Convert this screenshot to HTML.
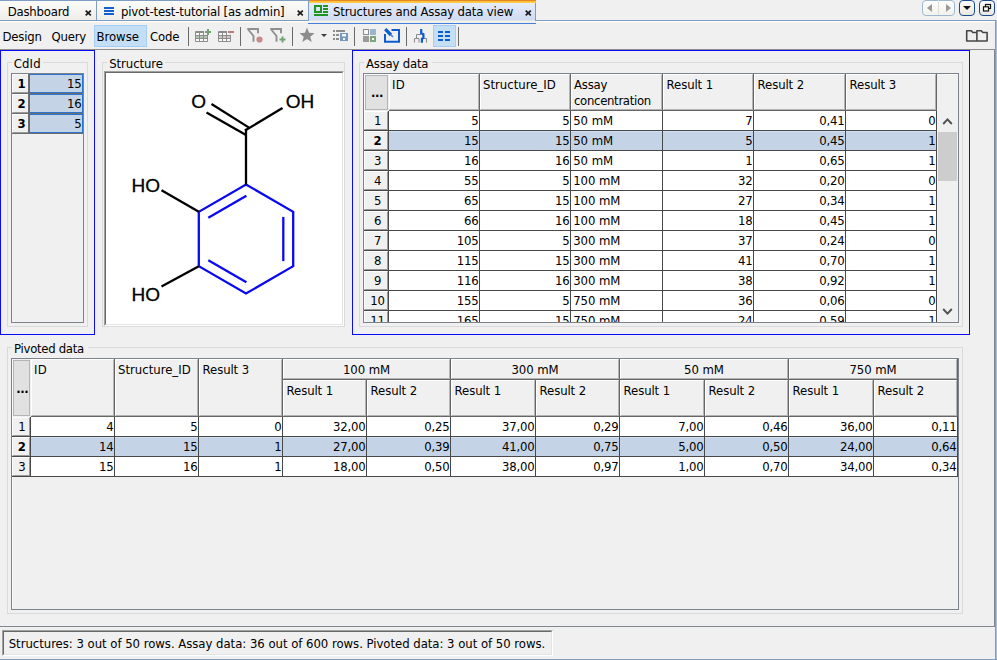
<!DOCTYPE html>
<html lang="en"><head><meta charset="utf-8"><title>Structures and Assay data view</title>
<style>
html,body{margin:0;padding:0;}
body{width:997px;height:660px;background:#f0f0f0;position:relative;overflow:hidden;font-family:"DejaVu Sans Condensed","Liberation Sans",sans-serif;font-size:13px;color:#000;}
.t{position:absolute;white-space:nowrap;line-height:16px;height:16px;letter-spacing:-0.2px;}
.hc{background:#f0f0f0;box-sizing:border-box;border-left:1px solid #fff;border-top:1px solid #fff;border-right:1px solid #b4b4b4;border-bottom:1px solid #b4b4b4;}
svg{position:absolute;overflow:visible}
</style></head>
<body>
<div style="position:absolute;left:0px;top:0px;width:97px;height:21px;box-sizing:border-box;border-top:1px solid #7d9ec2;border-right:1px solid #7d9ec2;background:linear-gradient(#fbfbf9,#eeede8)"></div>
<div style="position:absolute;left:97px;top:0px;width:212px;height:21px;box-sizing:border-box;border-top:1px solid #7d9ec2;border-right:1px solid #7d9ec2;background:linear-gradient(#fbfbf9,#eeede8)"></div>
<div style="position:absolute;left:0px;top:20px;width:309px;height:1px;background:#7d9ec2"></div>
<div style="position:absolute;left:0px;top:21px;width:309px;height:1px;background:#ffffff"></div>
<div style="position:absolute;left:535px;top:20px;width:461px;height:1px;background:#7d9ec2"></div>
<div style="position:absolute;left:536px;top:21px;width:459px;height:1px;background:#ffffff"></div>
<div style="position:absolute;left:536px;top:22px;width:459px;height:1px;background:#f6f3e8"></div>
<div style="position:absolute;left:0px;top:22px;width:308px;height:1px;background:#f6f3e8"></div>
<div style="position:absolute;left:309px;top:0px;width:226px;height:22px;background:linear-gradient(#f4f7fe 0px,#e6ecfb 3px,#cfdbf2 20px,#f5f1e2 21px)"></div>
<div style="position:absolute;left:309px;top:0px;width:227px;height:1px;background:#e5862b"></div>
<div style="position:absolute;left:309px;top:1px;width:227px;height:2px;background:linear-gradient(#ffbb25,#ffd257)"></div>
<div style="position:absolute;left:535px;top:3px;width:1px;height:18px;background:#7d9ec2"></div>
<div style="position:absolute;left:308px;top:23px;width:228px;height:1px;background:#437fdb"></div>
<div class="t tb" style="top:3.5px;left:7.699999999999999px;">Dashboard</div>
<div class="t tb" style="top:3.5px;left:121px;letter-spacing:-0.18px;">pivot-test-tutorial [as admin]</div>
<div class="t tb" style="top:3.5px;left:333px;letter-spacing:-0.16px;">Structures and Assay data view</div>
<svg style="left:84.7px;top:9.8px" width="7" height="6" viewBox="0 0 7 6"><path d="M0.7 0.6 L5.8 5.4 M5.8 0.6 L0.7 5.4" stroke="#1a1a1a" stroke-width="1.75" fill="none"/></svg>
<svg style="left:296.7px;top:9.8px" width="7" height="6" viewBox="0 0 7 6"><path d="M0.7 0.6 L5.8 5.4 M5.8 0.6 L0.7 5.4" stroke="#1a1a1a" stroke-width="1.75" fill="none"/></svg>
<svg style="left:524.8px;top:9.8px" width="7" height="6" viewBox="0 0 7 6"><path d="M0.7 0.6 L5.8 5.4 M5.8 0.6 L0.7 5.4" stroke="#1a1a1a" stroke-width="1.75" fill="none"/></svg>
<div style="position:absolute;left:104px;top:7px;width:10px;height:2px;background:#1560d0"></div>
<div style="position:absolute;left:104px;top:10px;width:10px;height:2px;background:#1560d0"></div>
<div style="position:absolute;left:104px;top:13px;width:10px;height:2px;background:#1560d0"></div>
<svg style="left:314px;top:5px" width="14" height="11" viewBox="0 0 14 11"><rect x="1" y="1" width="6" height="6" fill="none" stroke="#1f961f" stroke-width="2"/><rect x="9" y="0" width="5" height="2" fill="#1f961f"/><rect x="9" y="3" width="5" height="2" fill="#1f961f"/><rect x="9" y="6" width="5" height="2" fill="#1f961f"/><rect x="0" y="9" width="14" height="2" fill="#1f961f"/></svg>
<div style="position:absolute;left:922px;top:0px;width:33px;height:16px;box-sizing:border-box;border:1px solid #9db7d3;border-radius:4px;background:linear-gradient(#fdfdfc,#f3f2ec)"></div>
<div style="position:absolute;left:938px;top:0px;width:1px;height:15px;background:#dcdcd8"></div>
<svg style="left:927px;top:4px" width="5" height="8" viewBox="0 0 5 8"><path d="M5 0 L0 4 L5 8 Z" fill="#9a9a9a"/></svg>
<svg style="left:946px;top:4px" width="5" height="8" viewBox="0 0 5 8"><path d="M0 0 L5 4 L0 8 Z" fill="#9a9a9a"/></svg>
<div style="position:absolute;left:959px;top:0px;width:16px;height:16px;box-sizing:border-box;border:1px solid #184a8c;border-radius:4px;background:linear-gradient(#fdfdfc,#e9e8e0)"></div>
<svg style="left:963px;top:6px" width="8" height="4" viewBox="0 0 8 4"><path d="M0 0 L8 0 L4 4 Z" fill="#111"/></svg>
<div style="position:absolute;left:979px;top:0px;width:16px;height:16px;box-sizing:border-box;border:1px solid #184a8c;border-radius:4px;background:linear-gradient(#fdfdfc,#e9e8e0)"></div>
<svg style="left:983px;top:4px" width="9" height="8" viewBox="0 0 9 8"><rect x="2.5" y="0.5" width="5" height="4" fill="#fff" stroke="#111" stroke-width="1.2"/><rect x="0.5" y="2.8" width="5" height="4.2" fill="#fff" stroke="#111" stroke-width="1.2"/></svg>
<div style="position:absolute;left:995px;top:20px;width:1px;height:640px;background:#7d9ec2"></div>
<div style="position:absolute;left:996px;top:20px;width:1px;height:640px;background:#a9c0d8"></div>
<div style="position:absolute;left:0px;top:659px;width:997px;height:1px;background:#7d9ec2"></div>
<div style="position:absolute;left:0px;top:49px;width:995px;height:1px;background:#8c8c8c"></div>
<div style="position:absolute;left:94px;top:25px;width:53px;height:22px;box-sizing:border-box;border:1px solid #a3cdf3;background:#c4def5"></div>
<div class="t " style="top:28.5px;left:2.5px;">Design</div>
<div class="t " style="top:28.5px;left:51.5px;">Query</div>
<div class="t " style="top:28.5px;left:96.4px;letter-spacing:0px;">Browse</div>
<div class="t " style="top:28.5px;left:150px;">Code</div>
<div style="position:absolute;left:188px;top:27px;width:1px;height:19px;background:#6a6a6a"></div>
<div style="position:absolute;left:240px;top:27px;width:1px;height:19px;background:#6a6a6a"></div>
<div style="position:absolute;left:292px;top:27px;width:1px;height:19px;background:#6a6a6a"></div>
<div style="position:absolute;left:354px;top:27px;width:1px;height:19px;background:#6a6a6a"></div>
<div style="position:absolute;left:406px;top:27px;width:1px;height:19px;background:#6a6a6a"></div>
<div style="position:absolute;left:458px;top:27px;width:1px;height:19px;background:#6a6a6a"></div>
<svg style="left:195px;top:31px" width="13" height="11" viewBox="0 0 13 11"><rect x="0" y="0" width="13" height="11" rx="1" fill="#8c8c8c"/><rect x="1" y="2" width="3" height="2" fill="#fafafa"/><rect x="5" y="2" width="3" height="2" fill="#fafafa"/><rect x="9" y="2" width="3" height="2" fill="#fafafa"/><rect x="1" y="5" width="3" height="2" fill="#b4c4b4"/><rect x="5" y="5" width="3" height="2" fill="#b4c4b4"/><rect x="9" y="5" width="3" height="2" fill="#b4c4b4"/><rect x="1" y="8" width="3" height="2" fill="#fafafa"/><rect x="5" y="8" width="3" height="2" fill="#fafafa"/><rect x="9" y="8" width="3" height="2" fill="#fafafa"/></svg>
<svg style="left:204px;top:28px" width="8" height="9" viewBox="0 0 8 9"><path d="M0 0 H8 V9 L5.5 6.5 H0 Z" fill="#f0f0f0"/><path d="M4 1 V7 M1 4 H7" stroke="#72a272" stroke-width="2"/></svg>
<svg style="left:218px;top:31px" width="13" height="11" viewBox="0 0 13 11"><rect x="0" y="0" width="13" height="11" rx="1" fill="#8c8c8c"/><rect x="1" y="2" width="3" height="2" fill="#fafafa"/><rect x="5" y="2" width="3" height="2" fill="#fafafa"/><rect x="9" y="2" width="3" height="2" fill="#fafafa"/><rect x="1" y="5" width="3" height="2" fill="#d8c4c4"/><rect x="5" y="5" width="3" height="2" fill="#d8c4c4"/><rect x="9" y="5" width="3" height="2" fill="#d8c4c4"/><rect x="1" y="8" width="3" height="2" fill="#fafafa"/><rect x="5" y="8" width="3" height="2" fill="#fafafa"/><rect x="9" y="8" width="3" height="2" fill="#fafafa"/></svg>
<svg style="left:227px;top:30px" width="8" height="5" viewBox="0 0 8 5"><path d="M0 0 H8 V5 H4 L0 3.5 Z" fill="#f0f0f0"/><rect x="1" y="1" width="6" height="2" fill="#b97a7a"/></svg>
<svg style="left:247px;top:28px" width="15" height="14" viewBox="0 0 15 14"><path d="M0.3 1 H11 V5.2 M0.8 1 L6.5 8 V13.7" fill="none" stroke="#8f8f8f" stroke-width="1.9"/></svg>
<svg style="left:255.5px;top:35.5px" width="7" height="7" viewBox="0 0 7 7"><circle cx="3.5" cy="3.5" r="3.1" fill="#c98a8a"/></svg>
<svg style="left:270px;top:28px" width="15" height="14" viewBox="0 0 15 14"><path d="M0.3 1 H11 V5.2 M0.8 1 L6.5 8 V13.7" fill="none" stroke="#8f8f8f" stroke-width="1.9"/></svg>
<svg style="left:278.5px;top:35.5px" width="7" height="7" viewBox="0 0 7 7"><path d="M3.5 0.5 V6.5 M0.5 3.5 H6.5" stroke="#72a272" stroke-width="2"/></svg>
<svg style="left:299.2px;top:27px" width="16" height="16" viewBox="0 0 16 16"><polygon points="8.00,0.60 10.00,5.85 15.61,6.13 11.23,9.65 12.70,15.07 8.00,12.00 3.30,15.07 4.77,9.65 0.39,6.13 6.00,5.85" fill="#8c8c8c"/></svg>
<svg style="left:321px;top:34px" width="6" height="3" viewBox="0 0 6 3"><path d="M0 0 H6 L3 3 Z" fill="#3c3c3c"/></svg>
<svg style="left:333px;top:30px" width="15" height="11" viewBox="0 0 15 11"><g fill="#8c8c8c"><rect x="0" y="0" width="2" height="2"/><rect x="3" y="0" width="9" height="2"/><rect x="0" y="4" width="2" height="2"/><rect x="3" y="4" width="3" height="2"/><rect x="0" y="8" width="2" height="2"/><rect x="3" y="8" width="3" height="2"/></g><rect x="7" y="3" width="8" height="8" fill="#7697bd"/><rect x="9" y="4" width="4" height="2.5" fill="#f6f6f6"/><rect x="10" y="8" width="2" height="2" fill="#f6f6f6"/></svg>
<svg style="left:363px;top:29px" width="13" height="13" viewBox="0 0 13 13"><rect x="0.5" y="0.5" width="5" height="5" fill="#f8f8f8" stroke="#8a8a8a"/><rect x="7" y="0" width="6" height="6" fill="#9db4ce"/><rect x="0" y="7" width="6" height="6" fill="#9a9a9a"/><rect x="7" y="7" width="6" height="6" fill="#7fa57f"/><rect x="9" y="9" width="2" height="2" fill="#fafafa"/></svg>
<svg style="left:384px;top:28px" width="16" height="15" viewBox="0 0 16 15"><path d="M7.5 2 H15 V13.7 H1 V6" fill="none" stroke="#0d5bd1" stroke-width="2"/><path d="M1.2 1.2 L7 7" stroke="#0d5bd1" stroke-width="3.2"/><path d="M6.5 6.5 L9 9" stroke="#4a86dd" stroke-width="1.6"/></svg>
<svg style="left:414px;top:29px" width="13" height="14" viewBox="0 0 13 14"><path d="M0.5 13.6 V9.5 H5 V13.6 M2.5 9.5 V5.5 H7 M10 9.5 H12.5 V13.6" fill="none" stroke="#8a8a8a" stroke-width="1"/><path d="M7.2 0 V4.2 L9.4 5.2 V8.8 L7.9 9.8 V13.7" fill="none" stroke="#0d5bd1" stroke-width="2.2"/></svg>
<div style="position:absolute;left:433px;top:25px;width:23px;height:22px;box-sizing:border-box;border:1px solid #a3cdf3;background:#c4def5"></div>
<div style="position:absolute;left:438px;top:31px;width:5px;height:2px;background:#0d5bd1"></div>
<div style="position:absolute;left:438px;top:35px;width:5px;height:2px;background:#0d5bd1"></div>
<div style="position:absolute;left:438px;top:39px;width:5px;height:2px;background:#0d5bd1"></div>
<div style="position:absolute;left:445px;top:31px;width:5px;height:2px;background:#0d5bd1"></div>
<div style="position:absolute;left:445px;top:35px;width:5px;height:2px;background:#0d5bd1"></div>
<div style="position:absolute;left:445px;top:39px;width:5px;height:2px;background:#0d5bd1"></div>
<svg style="left:960px;top:24px" width="30" height="20" viewBox="0 0 30 20"><path d="M6.7 17 V6.7 H11.3 L12.8 8.5 H16.9 V17 Z M16.9 17 V6.7 H21.3 L22.8 8.5 H27.1 V17 Z" fill="none" stroke="#464646" stroke-width="1.6" stroke-linejoin="round"/></svg>
<div style="position:absolute;left:0px;top:50px;width:95px;height:285px;box-sizing:border-box;border:1px solid #0a0aff"></div>
<div style="position:absolute;left:7px;top:62px;width:81px;height:265px;box-sizing:border-box;border:1px solid #dadada"></div>
<div style="position:absolute;left:11.8px;top:62px;width:31px;height:1px;background:#f0f0f0"></div>
<div class="t " style="top:55.5px;left:13.8px;letter-spacing:0.1px;">CdId</div>
<div style="position:absolute;left:11px;top:73px;width:73px;height:250px;box-sizing:border-box;border:1px solid #7e828a"></div>
<div class="hc" style="position:absolute;left:12px;top:74px;width:17px;height:19px;border-right-color:#9a9a9a;border-bottom-color:#9a9a9a"></div>
<div class="t " style="top:75.5px;left:-78.5px;width:200px;text-align:center;font-weight:bold;">1</div>
<div style="position:absolute;left:29px;top:74px;width:54px;height:19px;box-sizing:border-box;border:1px solid #2a73cf;background:#c4d4e6"></div>
<div class="t " style="top:75.5px;right:915.5px;">15</div>
<div style="position:absolute;left:12px;top:93px;width:71px;height:1px;background:#6e6e6e"></div>
<div style="position:absolute;left:28px;top:74px;width:1px;height:19px;background:#6e6e6e"></div>
<div class="hc" style="position:absolute;left:12px;top:94px;width:17px;height:19px;border-right-color:#9a9a9a;border-bottom-color:#9a9a9a"></div>
<div class="t " style="top:95.5px;left:-78.5px;width:200px;text-align:center;font-weight:bold;">2</div>
<div style="position:absolute;left:29px;top:94px;width:54px;height:19px;box-sizing:border-box;border:1px solid #2a73cf;background:#c4d4e6"></div>
<div class="t " style="top:95.5px;right:915.5px;">16</div>
<div style="position:absolute;left:12px;top:113px;width:71px;height:1px;background:#6e6e6e"></div>
<div style="position:absolute;left:28px;top:94px;width:1px;height:19px;background:#6e6e6e"></div>
<div class="hc" style="position:absolute;left:12px;top:114px;width:17px;height:19px;border-right-color:#9a9a9a;border-bottom-color:#9a9a9a"></div>
<div class="t " style="top:115.5px;left:-78.5px;width:200px;text-align:center;font-weight:bold;">3</div>
<div style="position:absolute;left:29px;top:114px;width:54px;height:19px;box-sizing:border-box;border:1px solid #2a73cf;background:#c4d4e6"></div>
<div class="t " style="top:115.5px;right:915.5px;">5</div>
<div style="position:absolute;left:12px;top:133px;width:71px;height:1px;background:#6e6e6e"></div>
<div style="position:absolute;left:28px;top:114px;width:1px;height:19px;background:#6e6e6e"></div>
<div style="position:absolute;left:102px;top:62px;width:243px;height:265px;box-sizing:border-box;border:1px solid #dadada"></div>
<div style="position:absolute;left:107.3px;top:62px;width:58px;height:1px;background:#f0f0f0"></div>
<div class="t " style="top:55.5px;left:109.3px;letter-spacing:-0.1px;">Structure</div>
<div style="position:absolute;left:104px;top:71px;width:240px;height:255px;box-sizing:border-box;background:#fff;border-top:1px solid #a0a0a0;border-left:1px solid #a0a0a0;border-right:1px solid #fff;border-bottom:1px solid #fff"></div>
<div style="position:absolute;left:105px;top:72px;width:238px;height:253px;box-sizing:border-box;border-top:1px solid #696969;border-left:1px solid #696969;border-right:1px solid #e3e3e3;border-bottom:1px solid #e3e3e3"></div>
<svg style="left:0;top:0" width="997" height="660" viewBox="0 0 997 660"><polygon points="246.0,184.5 293.2,211.8 293.2,266.2 246.0,293.5 198.8,266.2 198.8,211.8" fill="none" stroke="#0a0af2" stroke-width="2.3" stroke-linejoin="miter"/><line x1="208.3" y1="217.7" x2="246.4" y2="195.7" stroke="#0a0af2" stroke-width="2.3" stroke-linecap="butt"/><line x1="283.3" y1="216.9" x2="283.3" y2="261.1" stroke="#0a0af2" stroke-width="2.3" stroke-linecap="butt"/><line x1="246.4" y1="282.3" x2="208.3" y2="260.3" stroke="#0a0af2" stroke-width="2.3" stroke-linecap="butt"/><line x1="246.0" y1="184.5" x2="246.0" y2="128.8" stroke="#000" stroke-width="2.3" stroke-linecap="butt"/><line x1="245.0" y1="130.6" x2="282.5" y2="108.0" stroke="#000" stroke-width="2.3" stroke-linecap="butt"/><line x1="249.0" y1="127.6" x2="211.5" y2="104.0" stroke="#000" stroke-width="2.3" stroke-linecap="butt"/><line x1="246.0" y1="135.0" x2="206.5" y2="112.5" stroke="#000" stroke-width="2.3" stroke-linecap="butt"/><line x1="198.8" y1="211.8" x2="161.5" y2="190.3" stroke="#000" stroke-width="2.3" stroke-linecap="butt"/><line x1="198.8" y1="266.2" x2="161.5" y2="286.6" stroke="#000" stroke-width="2.3" stroke-linecap="butt"/><g font-family="'Liberation Sans',sans-serif" font-size="19" fill="#000" stroke="#000" stroke-width="0.3"><text x="191.2" y="108.3">O</text><text x="285.8" y="108.3">OH</text><text x="131.6" y="191.8">HO</text><text x="131.6" y="300.6">HO</text></g></svg>
<div style="position:absolute;left:352px;top:50px;width:618px;height:285px;box-sizing:border-box;border:1px solid #0a0aff"></div>
<div style="position:absolute;left:359px;top:62px;width:604px;height:265px;box-sizing:border-box;border:1px solid #dadada"></div>
<div style="position:absolute;left:364px;top:62px;width:68px;height:1px;background:#f0f0f0"></div>
<div class="t " style="top:55.5px;left:366px;">Assay data</div>
<div style="position:absolute;left:363px;top:73px;width:596px;height:250px;box-sizing:border-box;border:1px solid #7e828a;background:#f0f0f0"></div>
<div style="position:absolute;left:364px;top:74px;width:1px;height:248px;background:#f9f9f9"></div>
<div style="position:absolute;left:364px;top:74px;width:594px;height:1px;background:#f9f9f9"></div>
<div style="position:absolute;left:389px;top:110px;width:547px;height:212px;background:#fff"></div>
<div style="position:absolute;left:365px;top:75px;width:23px;height:35px;background:#e1e1e1;box-sizing:border-box;border:1px solid #b4b4b4;"></div>
<div class="t " style="top:84.5px;left:277px;width:200px;text-align:center;font-weight:bold;letter-spacing:-0.5px;">...</div>
<div class="hc" style="position:absolute;left:389px;top:74px;width:90px;height:36px;"></div>
<div style="position:absolute;left:479px;top:74px;width:1px;height:37px;background:#666666"></div>
<div class="t " style="top:76.8px;left:392px;letter-spacing:0.4px;">ID</div>
<div class="hc" style="position:absolute;left:480px;top:74px;width:90px;height:36px;"></div>
<div style="position:absolute;left:570px;top:74px;width:1px;height:37px;background:#666666"></div>
<div class="t " style="top:76.8px;left:483px;letter-spacing:0.0px;">Structure_ID</div>
<div class="hc" style="position:absolute;left:571px;top:74px;width:91px;height:36px;"></div>
<div style="position:absolute;left:662px;top:74px;width:1px;height:37px;background:#666666"></div>
<div class="t " style="top:76.8px;left:574px;">Assay</div>
<div class="t " style="top:92.8px;left:574px;letter-spacing:-0.32px;">concentration</div>
<div class="hc" style="position:absolute;left:663px;top:74px;width:90px;height:36px;"></div>
<div style="position:absolute;left:753px;top:74px;width:1px;height:37px;background:#666666"></div>
<div class="t " style="top:76.8px;left:666.6px;letter-spacing:-0.1px;">Result 1</div>
<div class="hc" style="position:absolute;left:754px;top:74px;width:91px;height:36px;"></div>
<div style="position:absolute;left:845px;top:74px;width:1px;height:37px;background:#666666"></div>
<div class="t " style="top:76.8px;left:757.6px;letter-spacing:-0.1px;">Result 2</div>
<div class="hc" style="position:absolute;left:846px;top:74px;width:90px;height:36px;"></div>
<div style="position:absolute;left:936px;top:74px;width:1px;height:37px;background:#666666"></div>
<div class="t " style="top:76.8px;left:849.6px;letter-spacing:-0.1px;">Result 3</div>
<div style="position:absolute;left:389px;top:110px;width:548px;height:1px;background:#666666"></div>
<div style="position:absolute;left:364px;top:110px;width:594px;height:212px;overflow:hidden"><div style="position:absolute;left:-364px;top:-110px;width:997px;height:660px">
<div class="hc" style="position:absolute;left:364px;top:111px;width:24px;height:19px;border-right-color:#9a9a9a;border-bottom-color:#9a9a9a"></div>
<div class="t " style="top:112.5px;left:277.5px;width:200px;text-align:center;">1</div>
<div style="position:absolute;left:364px;top:130px;width:573px;height:1px;background:#484848"></div>
<div class="t " style="top:112.5px;right:518.5px;">5</div>
<div class="t " style="top:112.5px;right:427.5px;">5</div>
<div class="t " style="top:112.5px;left:573.2px;letter-spacing:-0.05px;">50 mM</div>
<div class="t " style="top:112.5px;right:244.5px;">7</div>
<div class="t " style="top:112.5px;right:152.5px;">0,41</div>
<div class="t " style="top:112.5px;right:61.5px;">0</div>
<div style="position:absolute;left:389px;top:131px;width:547px;height:19px;background:#c4d4e6"></div>
<div style="position:absolute;left:389px;top:131px;width:547px;height:1px;background:#d0dff1"></div>
<div class="hc" style="position:absolute;left:364px;top:131px;width:24px;height:19px;border-right-color:#9a9a9a;border-bottom-color:#9a9a9a"></div>
<div class="t " style="top:132.5px;left:277.5px;width:200px;text-align:center;font-weight:bold;">2</div>
<div style="position:absolute;left:364px;top:150px;width:573px;height:1px;background:#484848"></div>
<div class="t " style="top:132.5px;right:518.5px;">15</div>
<div class="t " style="top:132.5px;right:427.5px;">15</div>
<div class="t " style="top:132.5px;left:573.2px;letter-spacing:-0.05px;">50 mM</div>
<div class="t " style="top:132.5px;right:244.5px;">5</div>
<div class="t " style="top:132.5px;right:152.5px;">0,45</div>
<div class="t " style="top:132.5px;right:61.5px;">1</div>
<div class="hc" style="position:absolute;left:364px;top:151px;width:24px;height:19px;border-right-color:#9a9a9a;border-bottom-color:#9a9a9a"></div>
<div class="t " style="top:152.5px;left:277.5px;width:200px;text-align:center;">3</div>
<div style="position:absolute;left:364px;top:170px;width:573px;height:1px;background:#484848"></div>
<div class="t " style="top:152.5px;right:518.5px;">16</div>
<div class="t " style="top:152.5px;right:427.5px;">16</div>
<div class="t " style="top:152.5px;left:573.2px;letter-spacing:-0.05px;">50 mM</div>
<div class="t " style="top:152.5px;right:244.5px;">1</div>
<div class="t " style="top:152.5px;right:152.5px;">0,65</div>
<div class="t " style="top:152.5px;right:61.5px;">1</div>
<div class="hc" style="position:absolute;left:364px;top:171px;width:24px;height:19px;border-right-color:#9a9a9a;border-bottom-color:#9a9a9a"></div>
<div class="t " style="top:172.5px;left:277.5px;width:200px;text-align:center;">4</div>
<div style="position:absolute;left:364px;top:190px;width:573px;height:1px;background:#484848"></div>
<div class="t " style="top:172.5px;right:518.5px;">55</div>
<div class="t " style="top:172.5px;right:427.5px;">5</div>
<div class="t " style="top:172.5px;left:573.2px;letter-spacing:-0.05px;">100 mM</div>
<div class="t " style="top:172.5px;right:244.5px;">32</div>
<div class="t " style="top:172.5px;right:152.5px;">0,20</div>
<div class="t " style="top:172.5px;right:61.5px;">0</div>
<div class="hc" style="position:absolute;left:364px;top:191px;width:24px;height:19px;border-right-color:#9a9a9a;border-bottom-color:#9a9a9a"></div>
<div class="t " style="top:192.5px;left:277.5px;width:200px;text-align:center;">5</div>
<div style="position:absolute;left:364px;top:210px;width:573px;height:1px;background:#484848"></div>
<div class="t " style="top:192.5px;right:518.5px;">65</div>
<div class="t " style="top:192.5px;right:427.5px;">15</div>
<div class="t " style="top:192.5px;left:573.2px;letter-spacing:-0.05px;">100 mM</div>
<div class="t " style="top:192.5px;right:244.5px;">27</div>
<div class="t " style="top:192.5px;right:152.5px;">0,34</div>
<div class="t " style="top:192.5px;right:61.5px;">1</div>
<div class="hc" style="position:absolute;left:364px;top:211px;width:24px;height:19px;border-right-color:#9a9a9a;border-bottom-color:#9a9a9a"></div>
<div class="t " style="top:212.5px;left:277.5px;width:200px;text-align:center;">6</div>
<div style="position:absolute;left:364px;top:230px;width:573px;height:1px;background:#484848"></div>
<div class="t " style="top:212.5px;right:518.5px;">66</div>
<div class="t " style="top:212.5px;right:427.5px;">16</div>
<div class="t " style="top:212.5px;left:573.2px;letter-spacing:-0.05px;">100 mM</div>
<div class="t " style="top:212.5px;right:244.5px;">18</div>
<div class="t " style="top:212.5px;right:152.5px;">0,45</div>
<div class="t " style="top:212.5px;right:61.5px;">1</div>
<div class="hc" style="position:absolute;left:364px;top:231px;width:24px;height:19px;border-right-color:#9a9a9a;border-bottom-color:#9a9a9a"></div>
<div class="t " style="top:232.5px;left:277.5px;width:200px;text-align:center;">7</div>
<div style="position:absolute;left:364px;top:250px;width:573px;height:1px;background:#484848"></div>
<div class="t " style="top:232.5px;right:518.5px;">105</div>
<div class="t " style="top:232.5px;right:427.5px;">5</div>
<div class="t " style="top:232.5px;left:573.2px;letter-spacing:-0.05px;">300 mM</div>
<div class="t " style="top:232.5px;right:244.5px;">37</div>
<div class="t " style="top:232.5px;right:152.5px;">0,24</div>
<div class="t " style="top:232.5px;right:61.5px;">0</div>
<div class="hc" style="position:absolute;left:364px;top:251px;width:24px;height:19px;border-right-color:#9a9a9a;border-bottom-color:#9a9a9a"></div>
<div class="t " style="top:252.5px;left:277.5px;width:200px;text-align:center;">8</div>
<div style="position:absolute;left:364px;top:270px;width:573px;height:1px;background:#484848"></div>
<div class="t " style="top:252.5px;right:518.5px;">115</div>
<div class="t " style="top:252.5px;right:427.5px;">15</div>
<div class="t " style="top:252.5px;left:573.2px;letter-spacing:-0.05px;">300 mM</div>
<div class="t " style="top:252.5px;right:244.5px;">41</div>
<div class="t " style="top:252.5px;right:152.5px;">0,70</div>
<div class="t " style="top:252.5px;right:61.5px;">1</div>
<div class="hc" style="position:absolute;left:364px;top:271px;width:24px;height:19px;border-right-color:#9a9a9a;border-bottom-color:#9a9a9a"></div>
<div class="t " style="top:272.5px;left:277.5px;width:200px;text-align:center;">9</div>
<div style="position:absolute;left:364px;top:290px;width:573px;height:1px;background:#484848"></div>
<div class="t " style="top:272.5px;right:518.5px;">116</div>
<div class="t " style="top:272.5px;right:427.5px;">16</div>
<div class="t " style="top:272.5px;left:573.2px;letter-spacing:-0.05px;">300 mM</div>
<div class="t " style="top:272.5px;right:244.5px;">38</div>
<div class="t " style="top:272.5px;right:152.5px;">0,92</div>
<div class="t " style="top:272.5px;right:61.5px;">1</div>
<div class="hc" style="position:absolute;left:364px;top:291px;width:24px;height:19px;border-right-color:#9a9a9a;border-bottom-color:#9a9a9a"></div>
<div class="t " style="top:292.5px;left:277.5px;width:200px;text-align:center;">10</div>
<div style="position:absolute;left:364px;top:310px;width:573px;height:1px;background:#484848"></div>
<div class="t " style="top:292.5px;right:518.5px;">155</div>
<div class="t " style="top:292.5px;right:427.5px;">5</div>
<div class="t " style="top:292.5px;left:573.2px;letter-spacing:-0.05px;">750 mM</div>
<div class="t " style="top:292.5px;right:244.5px;">36</div>
<div class="t " style="top:292.5px;right:152.5px;">0,06</div>
<div class="t " style="top:292.5px;right:61.5px;">0</div>
<div class="hc" style="position:absolute;left:364px;top:311px;width:24px;height:19px;border-right-color:#9a9a9a;border-bottom-color:#9a9a9a"></div>
<div class="t " style="top:312.5px;left:277.5px;width:200px;text-align:center;">11</div>
<div style="position:absolute;left:364px;top:330px;width:573px;height:1px;background:#484848"></div>
<div class="t " style="top:312.5px;right:518.5px;">165</div>
<div class="t " style="top:312.5px;right:427.5px;">15</div>
<div class="t " style="top:312.5px;left:573.2px;letter-spacing:-0.05px;">750 mM</div>
<div class="t " style="top:312.5px;right:244.5px;">24</div>
<div class="t " style="top:312.5px;right:152.5px;">0,59</div>
<div class="t " style="top:312.5px;right:61.5px;">1</div>
<div style="position:absolute;left:388px;top:111px;width:1px;height:211px;background:#484848"></div>
<div style="position:absolute;left:479px;top:111px;width:1px;height:211px;background:#484848"></div>
<div style="position:absolute;left:570px;top:111px;width:1px;height:211px;background:#484848"></div>
<div style="position:absolute;left:662px;top:111px;width:1px;height:211px;background:#484848"></div>
<div style="position:absolute;left:753px;top:111px;width:1px;height:211px;background:#484848"></div>
<div style="position:absolute;left:845px;top:111px;width:1px;height:211px;background:#484848"></div>
<div style="position:absolute;left:936px;top:111px;width:1px;height:211px;background:#484848"></div>
</div></div>
<div style="position:absolute;left:938px;top:132px;width:19px;height:49px;background:#cdcdcd"></div>
<svg style="left:942px;top:118px" width="11" height="7" viewBox="0 0 11 7"><path d="M1.2 6 L5.5 1.4 L9.8 6" fill="none" stroke="#505050" stroke-width="1.9"/></svg>
<svg style="left:942px;top:308px" width="11" height="7" viewBox="0 0 11 7"><path d="M1.2 1 L5.5 5.6 L9.8 1" fill="none" stroke="#505050" stroke-width="1.9"/></svg>
<div style="position:absolute;left:7px;top:347px;width:956px;height:267px;box-sizing:border-box;border:1px solid #dadada"></div>
<div style="position:absolute;left:11.5px;top:347px;width:76px;height:1px;background:#f0f0f0"></div>
<div class="t " style="top:340.5px;left:14.1px;letter-spacing:-0.3px;">Pivoted data</div>
<div style="position:absolute;left:11px;top:358px;width:948px;height:252px;box-sizing:border-box;border:1px solid #7e828a;background:#f0f0f0"></div>
<div style="position:absolute;left:12px;top:359px;width:1px;height:250px;background:#f9f9f9"></div>
<div style="position:absolute;left:13px;top:360px;width:17px;height:56px;background:#e1e1e1;box-sizing:border-box;border:1px solid #b4b4b4;"></div>
<div class="t " style="top:380.5px;left:-77.8px;width:200px;text-align:center;font-weight:bold;letter-spacing:-0.5px;">...</div>
<div class="hc" style="position:absolute;left:31px;top:359px;width:83px;height:57px;"></div>
<div style="position:absolute;left:114px;top:359px;width:1px;height:58px;background:#666666"></div>
<div class="t " style="top:361.8px;left:34px;letter-spacing:0.4px;">ID</div>
<div class="hc" style="position:absolute;left:115px;top:359px;width:83px;height:57px;"></div>
<div style="position:absolute;left:198px;top:359px;width:1px;height:58px;background:#666666"></div>
<div class="t " style="top:361.8px;left:118px;letter-spacing:0.0px;">Structure_ID</div>
<div class="hc" style="position:absolute;left:199px;top:359px;width:83px;height:57px;"></div>
<div style="position:absolute;left:282px;top:359px;width:1px;height:58px;background:#666666"></div>
<div class="t " style="top:361.8px;left:202.6px;letter-spacing:-0.1px;">Result 3</div>
<div class="hc" style="position:absolute;left:283px;top:359px;width:167px;height:20px;"></div>
<div style="position:absolute;left:283px;top:379px;width:167px;height:1px;background:#666666"></div>
<div style="position:absolute;left:450px;top:359px;width:1px;height:58px;background:#666666"></div>
<div class="t " style="top:361.8px;left:266.5px;width:200px;text-align:center;letter-spacing:-0.05px;">100 mM</div>
<div class="hc" style="position:absolute;left:283px;top:380px;width:83px;height:36px;"></div>
<div style="position:absolute;left:366px;top:380px;width:1px;height:37px;background:#666666"></div>
<div class="t " style="top:382.8px;left:286.6px;letter-spacing:-0.1px;">Result 1</div>
<div class="hc" style="position:absolute;left:367px;top:380px;width:83px;height:36px;"></div>
<div class="t " style="top:382.8px;left:370.6px;letter-spacing:-0.1px;">Result 2</div>
<div class="hc" style="position:absolute;left:451px;top:359px;width:168px;height:20px;"></div>
<div style="position:absolute;left:451px;top:379px;width:168px;height:1px;background:#666666"></div>
<div style="position:absolute;left:619px;top:359px;width:1px;height:58px;background:#666666"></div>
<div class="t " style="top:361.8px;left:435.0px;width:200px;text-align:center;letter-spacing:-0.05px;">300 mM</div>
<div class="hc" style="position:absolute;left:451px;top:380px;width:84px;height:36px;"></div>
<div style="position:absolute;left:535px;top:380px;width:1px;height:37px;background:#666666"></div>
<div class="t " style="top:382.8px;left:454.6px;letter-spacing:-0.1px;">Result 1</div>
<div class="hc" style="position:absolute;left:536px;top:380px;width:83px;height:36px;"></div>
<div class="t " style="top:382.8px;left:539.6px;letter-spacing:-0.1px;">Result 2</div>
<div class="hc" style="position:absolute;left:620px;top:359px;width:168px;height:20px;"></div>
<div style="position:absolute;left:620px;top:379px;width:168px;height:1px;background:#666666"></div>
<div style="position:absolute;left:788px;top:359px;width:1px;height:58px;background:#666666"></div>
<div class="t " style="top:361.8px;left:604.0px;width:200px;text-align:center;letter-spacing:-0.05px;">50 mM</div>
<div class="hc" style="position:absolute;left:620px;top:380px;width:84px;height:36px;"></div>
<div style="position:absolute;left:704px;top:380px;width:1px;height:37px;background:#666666"></div>
<div class="t " style="top:382.8px;left:623.6px;letter-spacing:-0.1px;">Result 1</div>
<div class="hc" style="position:absolute;left:705px;top:380px;width:83px;height:36px;"></div>
<div class="t " style="top:382.8px;left:708.6px;letter-spacing:-0.1px;">Result 2</div>
<div class="hc" style="position:absolute;left:789px;top:359px;width:168px;height:20px;"></div>
<div style="position:absolute;left:789px;top:379px;width:168px;height:1px;background:#666666"></div>
<div style="position:absolute;left:957px;top:359px;width:1px;height:58px;background:#666666"></div>
<div class="t " style="top:361.8px;left:773.0px;width:200px;text-align:center;letter-spacing:-0.05px;">750 mM</div>
<div class="hc" style="position:absolute;left:789px;top:380px;width:84px;height:36px;"></div>
<div style="position:absolute;left:873px;top:380px;width:1px;height:37px;background:#666666"></div>
<div class="t " style="top:382.8px;left:792.6px;letter-spacing:-0.1px;">Result 1</div>
<div class="hc" style="position:absolute;left:874px;top:380px;width:83px;height:36px;"></div>
<div class="t " style="top:382.8px;left:877.6px;letter-spacing:-0.1px;">Result 2</div>
<div style="position:absolute;left:31px;top:416px;width:927px;height:1px;background:#666666"></div>
<div style="position:absolute;left:31px;top:417px;width:926px;height:59px;background:#fff"></div>
<div class="hc" style="position:absolute;left:12px;top:417px;width:18px;height:19px;border-right-color:#9a9a9a;border-bottom-color:#9a9a9a"></div>
<div class="t " style="top:418.5px;left:-78.2px;width:200px;text-align:center;">1</div>
<div style="position:absolute;left:12px;top:436px;width:946px;height:1px;background:#484848"></div>
<div class="t " style="top:418.5px;right:883.5px;">4</div>
<div class="t " style="top:418.5px;right:799.5px;">5</div>
<div class="t " style="top:418.5px;right:715.5px;">0</div>
<div class="t " style="top:418.5px;right:631.5px;">32,00</div>
<div class="t " style="top:418.5px;right:547.5px;">0,25</div>
<div class="t " style="top:418.5px;right:462.5px;">37,00</div>
<div class="t " style="top:418.5px;right:378.5px;">0,29</div>
<div class="t " style="top:418.5px;right:293.5px;">7,00</div>
<div class="t " style="top:418.5px;right:209.5px;">0,46</div>
<div class="t " style="top:418.5px;right:124.5px;">36,00</div>
<div class="t " style="top:418.5px;right:40.5px;">0,11</div>
<div style="position:absolute;left:31px;top:437px;width:926px;height:19px;background:#c4d4e6"></div>
<div style="position:absolute;left:31px;top:437px;width:926px;height:1px;background:#d0dff1"></div>
<div class="hc" style="position:absolute;left:12px;top:437px;width:18px;height:19px;border-right-color:#9a9a9a;border-bottom-color:#9a9a9a"></div>
<div class="t " style="top:438.5px;left:-78.2px;width:200px;text-align:center;font-weight:bold;">2</div>
<div style="position:absolute;left:12px;top:456px;width:946px;height:1px;background:#484848"></div>
<div class="t " style="top:438.5px;right:883.5px;">14</div>
<div class="t " style="top:438.5px;right:799.5px;">15</div>
<div class="t " style="top:438.5px;right:715.5px;">1</div>
<div class="t " style="top:438.5px;right:631.5px;">27,00</div>
<div class="t " style="top:438.5px;right:547.5px;">0,39</div>
<div class="t " style="top:438.5px;right:462.5px;">41,00</div>
<div class="t " style="top:438.5px;right:378.5px;">0,75</div>
<div class="t " style="top:438.5px;right:293.5px;">5,00</div>
<div class="t " style="top:438.5px;right:209.5px;">0,50</div>
<div class="t " style="top:438.5px;right:124.5px;">24,00</div>
<div class="t " style="top:438.5px;right:40.5px;">0,64</div>
<div class="hc" style="position:absolute;left:12px;top:457px;width:18px;height:19px;border-right-color:#9a9a9a;border-bottom-color:#9a9a9a"></div>
<div class="t " style="top:458.5px;left:-78.2px;width:200px;text-align:center;">3</div>
<div style="position:absolute;left:12px;top:476px;width:946px;height:1px;background:#484848"></div>
<div class="t " style="top:458.5px;right:883.5px;">15</div>
<div class="t " style="top:458.5px;right:799.5px;">16</div>
<div class="t " style="top:458.5px;right:715.5px;">1</div>
<div class="t " style="top:458.5px;right:631.5px;">18,00</div>
<div class="t " style="top:458.5px;right:547.5px;">0,50</div>
<div class="t " style="top:458.5px;right:462.5px;">38,00</div>
<div class="t " style="top:458.5px;right:378.5px;">0,97</div>
<div class="t " style="top:458.5px;right:293.5px;">1,00</div>
<div class="t " style="top:458.5px;right:209.5px;">0,70</div>
<div class="t " style="top:458.5px;right:124.5px;">34,00</div>
<div class="t " style="top:458.5px;right:40.5px;">0,34</div>
<div style="position:absolute;left:30px;top:417px;width:1px;height:60px;background:#484848"></div>
<div style="position:absolute;left:114px;top:417px;width:1px;height:60px;background:#484848"></div>
<div style="position:absolute;left:198px;top:417px;width:1px;height:60px;background:#484848"></div>
<div style="position:absolute;left:282px;top:417px;width:1px;height:60px;background:#484848"></div>
<div style="position:absolute;left:366px;top:417px;width:1px;height:60px;background:#484848"></div>
<div style="position:absolute;left:450px;top:417px;width:1px;height:60px;background:#484848"></div>
<div style="position:absolute;left:535px;top:417px;width:1px;height:60px;background:#484848"></div>
<div style="position:absolute;left:619px;top:417px;width:1px;height:60px;background:#484848"></div>
<div style="position:absolute;left:704px;top:417px;width:1px;height:60px;background:#484848"></div>
<div style="position:absolute;left:788px;top:417px;width:1px;height:60px;background:#484848"></div>
<div style="position:absolute;left:873px;top:417px;width:1px;height:60px;background:#484848"></div>
<div style="position:absolute;left:957px;top:417px;width:1px;height:60px;background:#484848"></div>
<div style="position:absolute;left:994px;top:50px;width:1px;height:577px;background:#82868e"></div>
<div style="position:absolute;left:0px;top:626px;width:995px;height:1px;background:#82868e"></div>
<div style="position:absolute;left:2px;top:630px;width:551px;height:26px;box-sizing:border-box;border-top:1px solid #a0a0a0;border-left:1px solid #a0a0a0;border-right:1px solid #fff;border-bottom:1px solid #fff"></div>
<div style="position:absolute;left:3px;top:631px;width:549px;height:24px;box-sizing:border-box;border-top:1px solid #696969;border-left:1px solid #696969;border-right:1px solid #e3e3e3;border-bottom:1px solid #e3e3e3"></div>
<div class="t " style="top:635.5px;left:8.7px;letter-spacing:-0.03px;">Structures: 3 out of 50 rows. Assay data: 36 out of 600 rows. Pivoted data: 3 out of 50 rows.</div>
</body></html>
